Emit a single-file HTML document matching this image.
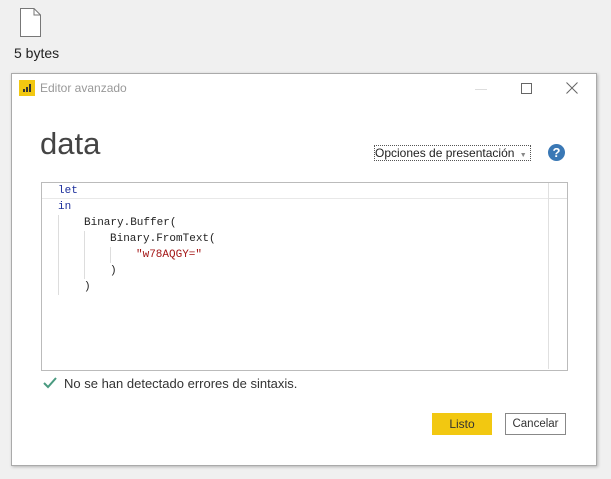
<!DOCTYPE html>
<html><head><style>
body{margin:0;width:611px;height:479px;background:#f0f0f0;font-family:"Liberation Sans",sans-serif;position:relative;overflow:hidden}
.a{position:absolute}
.mono{font-family:"Liberation Mono",monospace;font-size:11px;position:absolute;line-height:16px;color:#222}
</style></head><body>
<svg class="a" style="left:20px;top:8px" width="22" height="30"><path d="M0.5 0.5H14L20.5 7V28.5H0.5Z" fill="#fff" stroke="#777"/><path d="M14 0.5V7H20.5" fill="none" stroke="#777"/></svg>
<div class="a" style="left:14px;top:45px;font-size:14px;color:#222">5 bytes</div>
<div class="a" style="left:11px;top:73px;width:584px;height:391px;background:#fff;border:1px solid #aaa;box-shadow:1px 1px 3px rgba(0,0,0,.25)"></div>
<div class="a" style="left:19px;top:80px;width:16px;height:16px;background:#f2c811"></div>
<svg class="a" style="left:19px;top:80px" width="16" height="16"><rect x="4" y="9" width="2" height="3" fill="#333"/><rect x="7" y="7" width="2" height="5" fill="#333"/><rect x="10" y="4" width="2" height="8" fill="#333"/></svg>
<div class="a" style="left:40px;top:81px;font-size:12px;color:#999">Editor avanzado</div>
<div class="a" style="left:475px;top:89px;width:12px;height:1px;background:#ddd"></div>
<div class="a" style="left:521px;top:83px;width:9px;height:9px;border:1px solid #666"></div>
<svg class="a" style="left:566px;top:82px" width="12" height="12"><path d="M0.5 0.5L11.5 11.5M11.5 0.5L0.5 11.5" stroke="#666"/></svg>
<div class="a" style="left:40px;top:126px;font-size:31px;color:#444">data</div>
<div class="a" style="left:374px;top:145px;width:155px;height:14px;border:1px dotted #555;font-size:12px;color:#222;line-height:14px">Opciones de presentación <span style="font-size:7px;color:#888;margin-left:2px">▼</span></div>
<div class="a" style="left:548px;top:144px;width:17px;height:17px;border-radius:50%;background:#3a78b5;color:#fff;font-weight:bold;font-size:13px;text-align:center;line-height:17px">?</div>
<div class="a" style="left:41px;top:182px;width:525px;height:187px;border:1px solid #bbb"></div>
<div class="a" style="left:42px;top:183px;width:506px;height:15px;border-bottom:1px solid #e8e8e8"></div>
<div class="a" style="left:548px;top:183px;width:1px;height:186px;background:#e0e0e0"></div>
<div class="a" style="left:549px;top:198px;width:18px;height:1px;background:#e0e0e0"></div>
<div class="a" style="left:58px;top:215px;width:1px;height:80px;background:#ddd"></div>
<div class="a" style="left:84px;top:231px;width:1px;height:48px;background:#ddd"></div>
<div class="a" style="left:110px;top:247px;width:1px;height:16px;background:#ddd"></div>
<div class="mono" style="left:58px;top:183px;color:#1b2e9c">let</div>
<div class="mono" style="left:58px;top:199px;color:#1b2e9c">in</div>
<div class="mono" style="left:84px;top:215px">Binary.Buffer(</div>
<div class="mono" style="left:110px;top:231px">Binary.FromText(</div>
<div class="mono" style="left:136px;top:247px;color:#a31515">"w78AQGY="</div>
<div class="mono" style="left:110px;top:263px">)</div>
<div class="mono" style="left:84px;top:279px">)</div>
<svg class="a" style="left:42px;top:376px" width="16" height="14"><path d="M2 7L6 11L14 2" fill="none" stroke="#4a9a80" stroke-width="2"/></svg>
<div class="a" style="left:64px;top:376px;font-size:13px;color:#333">No se han detectado errores de sintaxis.</div>
<div class="a" style="left:432px;top:413px;width:60px;height:22px;background:#f2c811;font-size:12px;color:#333;text-align:center;line-height:22px">Listo</div>
<div class="a" style="left:505px;top:413px;width:59px;height:20px;border:1px solid #888;font-size:11.5px;color:#333;text-align:center;line-height:20px">Cancelar</div>
</body></html>
